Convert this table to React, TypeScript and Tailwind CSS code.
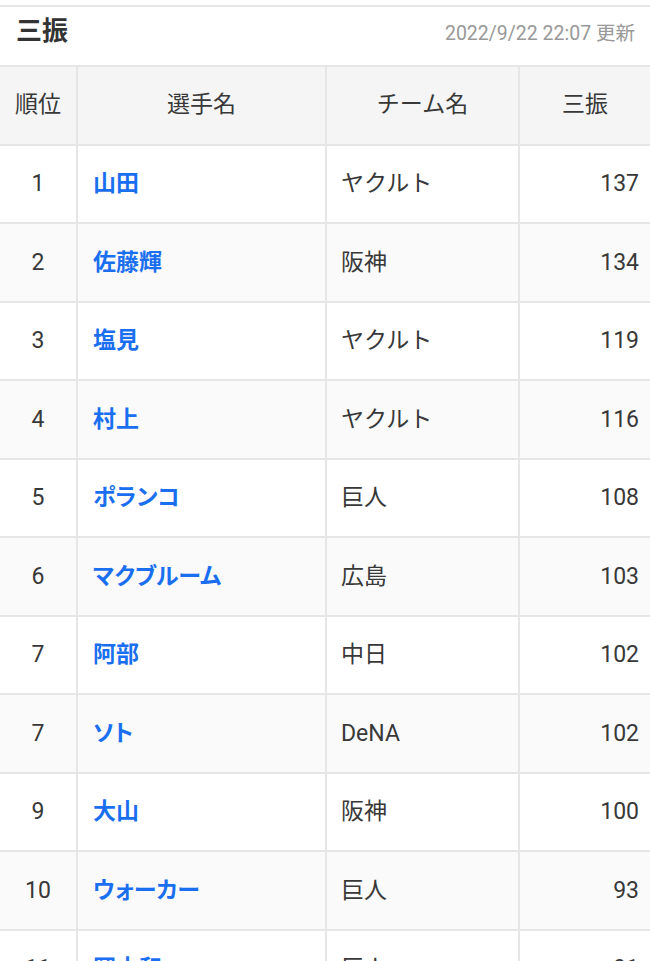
import React from "react";

const rows = [
  ["1", "山田", "ヤクルト", "137"],
  ["2", "佐藤輝", "阪神", "134"],
  ["3", "塩見", "ヤクルト", "119"],
  ["4", "村上", "ヤクルト", "116"],
  ["5", "ポランコ", "巨人", "108"],
  ["6", "マクブルーム", "広島", "103"],
  ["7", "阿部", "中日", "102"],
  ["7", "ソト", "DeNA", "102"],
  ["9", "大山", "阪神", "100"],
  ["10", "ウォーカー", "巨人", "93"],
  ["11", "岡本和", "巨人", "91"],
  ["12", "中野", "阪神", "90"],
];

const font = { fontFamily: "Roboto, 'Noto Sans CJK JP', sans-serif" };
const palt = { fontFeatureSettings: "'palt'" };

export default function App() {
  return (
    <div className="w-[650px] bg-white text-[#383838]" style={font}>
      <div className="h-[5px]" />
      <div className="border-t-2 border-[#e6e6e6] h-[60px] flex items-baseline justify-between pl-4 pr-[15px] pt-[8px]">
        <span className="text-[26px] font-bold leading-[32px] text-[#333]">三振</span>
        <span className="text-[19.5px] text-[#999]">2022/9/22 22:07 更新</span>
      </div>
      <div className="grid grid-cols-[78px_249px_193px_130px] border-t-2 border-[#e6e6e6]">
        <div className="h-[78.5px] border-b-2 border-r-2 border-[#e6e6e6] bg-[#f5f5f5] flex items-center justify-center text-[23px]">順位</div>
        <div className="h-[78.5px] border-b-2 border-r-2 border-[#e6e6e6] bg-[#f5f5f5] flex items-center justify-center text-[23px]">選手名</div>
        <div className="h-[78.5px] border-b-2 border-r-2 border-[#e6e6e6] bg-[#f5f5f5] flex items-center justify-center text-[23px]">チーム名</div>
        <div className="h-[78.5px] border-b-2 border-[#e6e6e6] bg-[#f5f5f5] flex items-center justify-center text-[23px]">三振</div>
        {rows.map((r, i) => {
          const bg = i % 2 === 1 ? "bg-[#fafafa]" : "bg-white";
          return (
            <React.Fragment key={i}>
              <div className={`h-[78.5px] border-b-2 border-r-2 border-[#e6e6e6] ${bg} flex items-center justify-center text-[23px] pt-[1px]`}>{r[0]}</div>
              <div className={`h-[78.5px] border-b-2 border-r-2 border-[#e6e6e6] ${bg} flex items-center pl-[15px] text-[23px] font-bold text-[#1a6ff0] pt-[1px]`} style={palt}>{r[1]}</div>
              <div className={`h-[78.5px] border-b-2 border-r-2 border-[#e6e6e6] ${bg} flex items-center pl-[14px] text-[23px] pt-[1px]`}>{r[2]}</div>
              <div className={`h-[78.5px] border-b-2 border-[#e6e6e6] ${bg} flex items-center justify-end pr-[11px] text-[23px] pt-[1px]`}>{r[3]}</div>
            </React.Fragment>
          );
        })}
      </div>
    </div>
  );
}
